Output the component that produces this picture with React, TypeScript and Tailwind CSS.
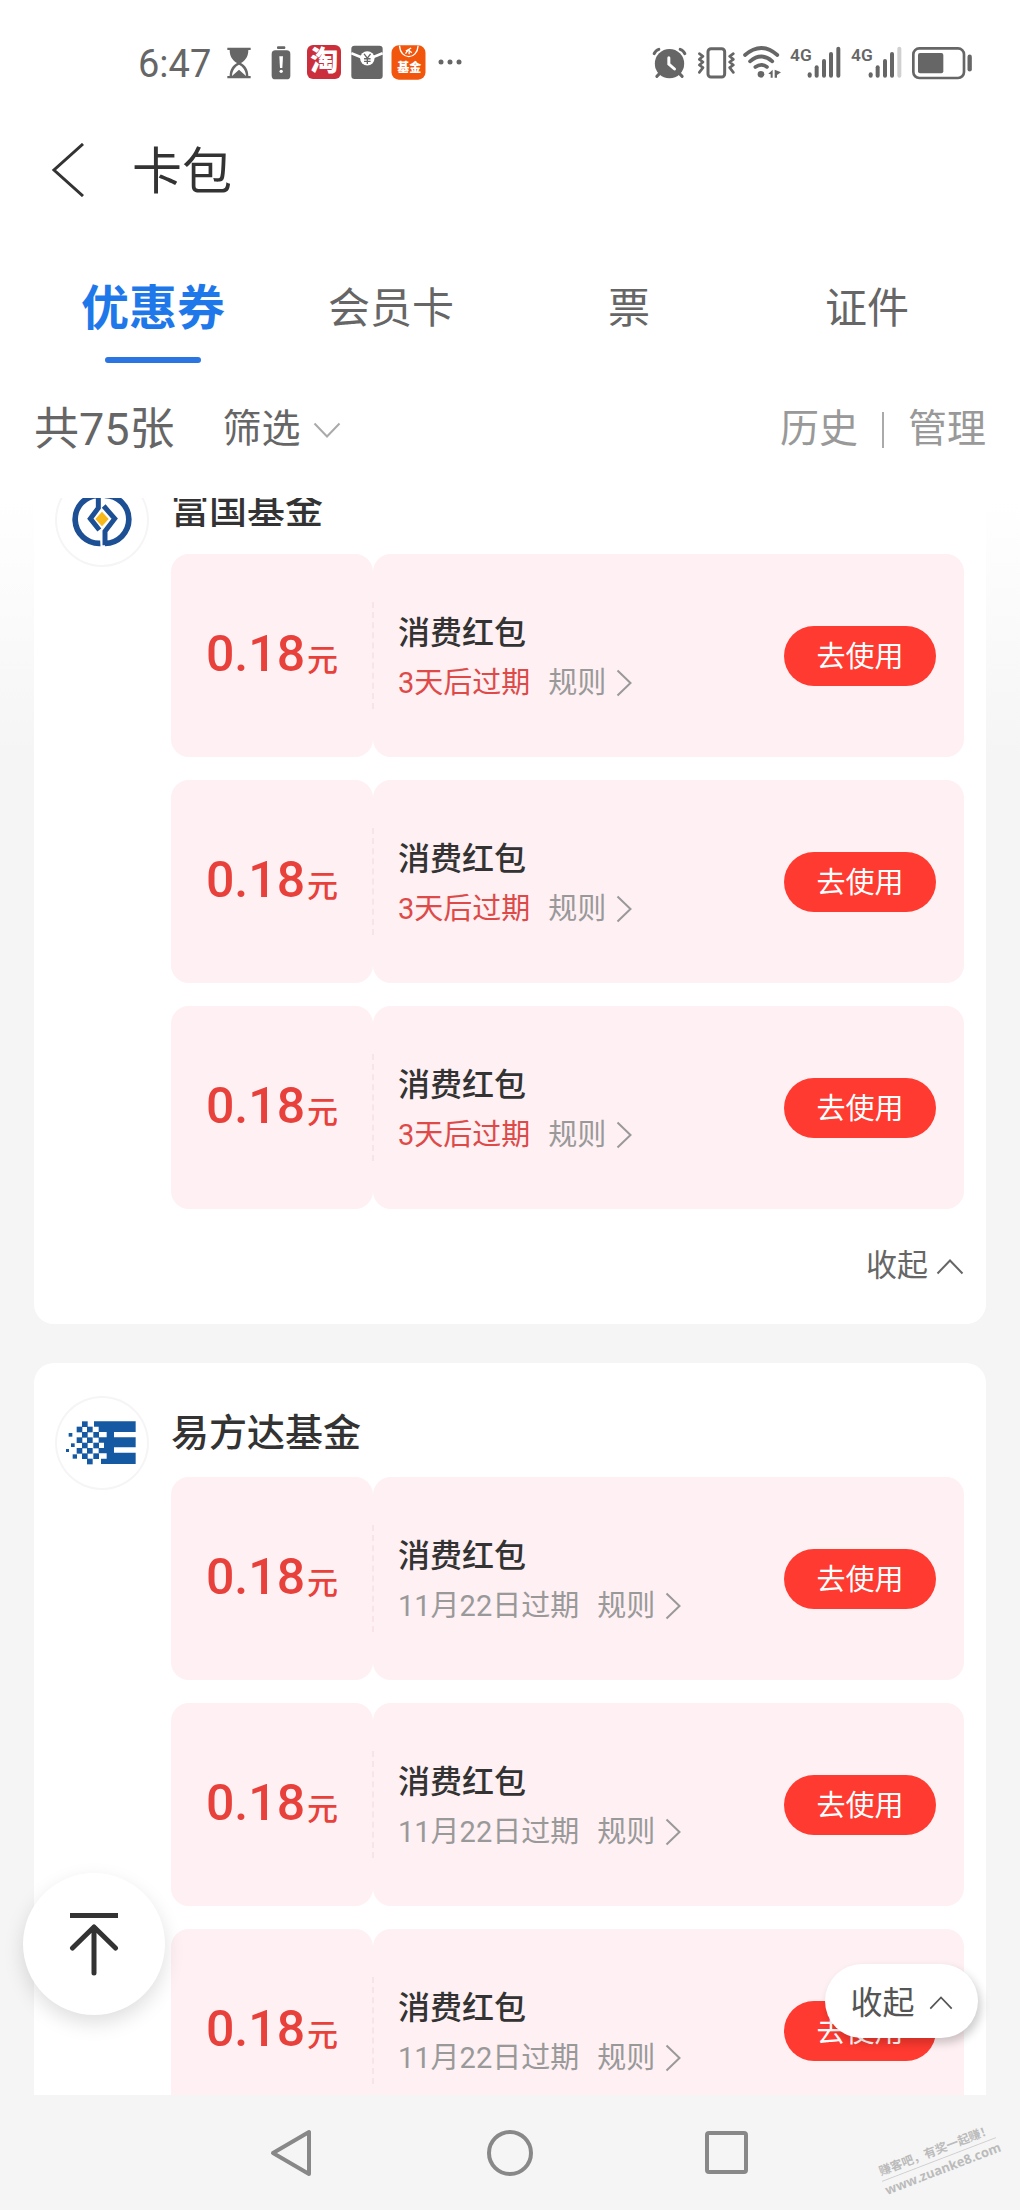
import React from "react";

type Coupon = { amount: string; title: string; expiry: string; urgent: boolean };
type Merchant = { name: string; logo: React.ReactNode; coupons: Coupon[] };

const repeat = (coupon: Coupon, count: number): Coupon[] => Array.from({ length: count }, () => coupon);

function Chevron({ direction, className }: { direction: "up" | "down" | "right"; className: string }) {
  const shape = {
    up: { box: "0 0 28 16", d: "M1.5 14.5 14 1.5 26.5 14.5" },
    down: { box: "0 0 28 16", d: "M1.5 1.5 14 14.5 26.5 1.5" },
    right: { box: "0 0 16 28", d: "M1.5 1.5 14.5 14 1.5 26.5" },
  }[direction];
  return (
    <svg viewBox={shape.box} className={className} fill="none" stroke="currentColor" strokeWidth="2" aria-hidden="true">
      <path d={shape.d} />
    </svg>
  );
}

function FullgoalLogo() {
  return (
    <svg viewBox="81 -9 270 270" className="size-full" fill="none" stroke="#1d4f94" strokeWidth="17" aria-hidden="true">
      <path d="M211 196 A72 72 0 0 1 204 52" />
      <path d="M224 52 A72 72 0 0 1 225 196" />
      <path d="M205 46 V90 L181 122 L208 156" strokeWidth="15" />
      <path d="M225 202 V160 L254 122 L221 84" strokeWidth="15" />
      <path d="M216 101 L236 123 L216 145 L196 123 Z" fill="#f6b81a" stroke="none" />
    </svg>
  );
}

function EfundLogo() {
  const cells: [number, number][] = [
    [156, 211],
    [140, 227], [171, 227],
    [156, 243], [190, 243],
    [140, 259], [171, 259],
    [156, 275], [190, 275],
    [140, 291], [171, 291],
    [156, 307], [190, 307],
    [171, 323],
  ];
  return (
    <svg viewBox="81 141 270 270" className="size-full" fill="#1559a3" aria-hidden="true">
      {cells.map(([x, y]) => (
        <rect key={`${x}-${y}`} x={x} y={y} width="17" height="17" />
      ))}
      <path d="M192 211 H317 V243 H252 V259 H317 V289 H252 V305 H317 V339 H213 V323 H230 V307 H206 V291 H222 V275 H206 V259 H230 V243 H206 V227 H192 Z" />
      <rect x="116" y="246" width="11" height="11" />
      <rect x="123" y="277" width="11" height="11" />
      <rect x="108" y="294" width="9" height="9" />
      <rect x="128" y="310" width="13" height="13" />
    </svg>
  );
}

const merchants: Merchant[] = [
  {
    name: "富国基金",
    logo: <FullgoalLogo />,
    coupons: repeat({ amount: "0.18", title: "消费红包", expiry: "3天后过期", urgent: true }, 3),
  },
  {
    name: "易方达基金",
    logo: <EfundLogo />,
    coupons: repeat({ amount: "0.18", title: "消费红包", expiry: "11月22日过期", urgent: false }, 3),
  },
];

function Signal({ weak }: { weak?: boolean }) {
  return (
    <svg viewBox="472 44 153 105" className="h-[35px] w-[51px]" aria-hidden="true">
      <text x="472" y="91" fontSize="52" fontWeight="600" fill="#666" fontFamily="Roboto, sans-serif">4G</text>
      <g stroke="#666" strokeWidth="12" strokeLinecap="round">
        <path d="M531 132 V136" />
        <path d="M552 111 V136" />
        <path d="M574 92 V136" />
        <path d="M595 71 V136" />
        <path d="M617 55 V136" stroke={weak ? "#d0d0d0" : "#666"} />
      </g>
    </svg>
  );
}

function StatusBar() {
  return (
    <div className="flex h-[124px] items-center justify-between pr-[47px] pl-[138px] text-[#666]">
      <div className="flex items-center">
        <span className="pt-1 text-[38px] leading-none">6:47</span>
        <svg viewBox="320 44 72 105" className="ml-4 h-[35px] w-6" fill="#666" aria-hidden="true">
          <path d="M321 52 H391 V59 H384 C384 82 372 92 362 98 C374 105 384 116 384 137 H391 V144 H321 V137 H328 C328 116 338 105 350 98 C340 92 328 82 328 59 H321 Z" />
          <path d="M335 137 C336 118 346 108 356 103 C366 108 376 118 377 137 L356 118 Z" fill="#fff" />
        </svg>
        <svg viewBox="453 44 60 105" className="ml-5 h-[35px] w-5" fill="#666" aria-hidden="true">
          <rect x="471" y="48" width="25" height="8" rx="3" />
          <rect x="455" y="60" width="56" height="87" rx="11" />
          <path d="M478 78 H489 L487 113 H480 Z" fill="#fff" />
          <circle cx="483.500" cy="123" r="5" fill="#fff" />
        </svg>
        <span className="ml-4 flex size-[34px] items-center justify-center rounded-md bg-[#cb2f3c] text-[28px] leading-none font-black text-white">淘</span>
        <svg viewBox="689 44 98 105" className="ml-2.5 h-[35px] w-8" aria-hidden="true">
          <rect x="690" y="45" width="96" height="102" rx="10" fill="#666" />
          <path d="M690 68 L724 82 M786 68 L752 82" stroke="#fff" strokeWidth="8" />
          <circle cx="739" cy="84" r="22" fill="#fff" />
          <path d="M729 70 L739 83 L749 70 M739 83 V101 M729 85 H749 M729 93 H749" stroke="#666" strokeWidth="4" fill="none" />
        </svg>
        <svg viewBox="812 44 104 105" className="ml-2 size-[35px]" aria-hidden="true">
          <rect x="813" y="45" width="102" height="103" rx="22" fill="#f2560c" />
          <path d="M837 46 C840 90 890 90 893 46" fill="none" stroke="#fff" strokeWidth="4" />
          <path d="M856 62 L872 53 M855 70 L862 60 M864 59 L874 67 M866 56 V72" stroke="#fff" strokeWidth="4" />
          <text x="866" y="125" textAnchor="middle" fontSize="36" fontWeight="900" fill="#fff" fontFamily="'Noto Sans CJK SC', sans-serif">基金</text>
        </svg>
        <svg viewBox="0 0 24 6" className="ml-3 h-1.5 w-6" fill="#666" aria-hidden="true">
          <circle cx="3" cy="3" r="2.500" />
          <circle cx="12" cy="3" r="2.500" />
          <circle cx="21" cy="3" r="2.500" />
        </svg>
      </div>
      <div className="flex items-center">
        <svg viewBox="60 44 104 105" className="size-[35px]" fill="none" stroke="#666" strokeLinecap="round" aria-hidden="true">
          <circle cx="112" cy="100" r="44" fill="#666" stroke="none" />
          <path d="M66 70 Q70 60 80 57 M158 70 Q154 60 144 57" strokeWidth="9" />
          <path d="M82 130 L74 138 M142 130 L150 138" strokeWidth="9" />
          <path d="M110 82 V101 L127 116" stroke="#fff" strokeWidth="9" />
        </svg>
        <svg viewBox="193 44 114 105" className="ml-2.5 h-[35px] w-[38px]" fill="none" stroke="#666" strokeLinecap="round" strokeLinejoin="round" aria-hidden="true">
          <rect x="226" y="55" width="50" height="85" rx="9" strokeWidth="9" />
          <path d="M200 70 L211 78 L200 87 L211 95 L200 104 L211 112 L200 126" strokeWidth="8" />
          <path d="M302 70 L291 78 L302 87 L291 95 L302 104 L291 112 L302 126" strokeWidth="8" />
        </svg>
        <svg viewBox="335 44 117 105" className="ml-2 h-[35px] w-[39px]" fill="none" stroke="#666" strokeWidth="11" strokeLinecap="round" aria-hidden="true">
          <path d="M341 74 Q390 32 438 74" />
          <path d="M356 93 Q390 64 423 93" />
          <path d="M372 110 Q390 97 407 110" />
          <circle cx="389" cy="132" r="10" fill="#666" stroke="none" />
          <path d="M411 130 L424 118 V142 H418 V132 Z" fill="#666" stroke="none" />
          <path d="M430 118 L449 126 L437 134 V142 H430 Z" fill="#666" stroke="none" />
        </svg>
        <div className="ml-2"><Signal /></div>
        <div className="ml-2.5"><Signal weak /></div>
        <svg viewBox="843 44 183 105" className="ml-2.5 h-[35px] w-[61px]" aria-hidden="true">
          <rect x="847" y="54" width="152" height="89" rx="18" fill="none" stroke="#666" strokeWidth="8" />
          <rect x="861" y="68" width="76" height="61" rx="6" fill="#666" />
          <path d="M1016 79 V117" stroke="#666" strokeWidth="13" strokeLinecap="round" />
        </svg>
      </div>
    </div>
  );
}

function CouponRow({ coupon }: { coupon: Coupon }) {
  return (
    <li className="relative flex h-[203px]">
      <div className="flex w-[202px] items-center justify-center rounded-[18px] bg-[#fef0f3] text-[#e8403a]">
        <p className="flex items-baseline gap-0.5 pb-1 leading-none font-medium">
          <span className="text-[50px]">{coupon.amount}</span>
          <span className="text-[31px]">元</span>
        </p>
      </div>
      <span className="absolute top-12 bottom-12 left-[201px] border-l-2 border-dashed border-[#f8e4e8]" />
      <div className="flex flex-1 items-center justify-between rounded-[18px] bg-[#fef0f3] pr-7 pl-[25px]">
        <div className="pt-1">
          <h3 className="text-[32px] leading-[50px] font-medium text-[#333]">{coupon.title}</h3>
          <div className="flex items-center gap-[18px] text-[29px] leading-[50px]">
            <span className={coupon.urgent ? "text-[#dd4a48]" : "text-[#999]"}>{coupon.expiry}</span>
            <button type="button" className="flex items-center gap-2.5 text-[#999]">
              规则
              <Chevron direction="right" className="h-7 w-4" />
            </button>
          </div>
        </div>
        <button type="button" className="h-[60px] w-[152px] rounded-full bg-[#ff3a30] pt-1 text-[29px] leading-none text-white">
          去使用
        </button>
      </div>
    </li>
  );
}

function MerchantCard({ merchant }: { merchant: Merchant }) {
  return (
    <section className="flex gap-6 rounded-[20px] bg-white pt-[35px] pr-[22px] pl-[23px]">
      <div className="size-[90px] shrink-0 overflow-hidden rounded-full ring-2 ring-[#f5f5f5]">{merchant.logo}</div>
      <div className="flex-1">
        <h2 className="mb-[9px] text-[38px] leading-[70px] font-medium text-[#333]">{merchant.name}</h2>
        <ul className="flex flex-col gap-[23px]">
          {merchant.coupons.map((coupon, index) => (
            <CouponRow key={index} coupon={coupon} />
          ))}
        </ul>
        <div className="flex h-[115px] justify-end">
          <button type="button" className="flex items-center gap-2 text-[31px] text-[#666]">
            收起
            <Chevron direction="up" className="h-4 w-7" />
          </button>
        </div>
      </div>
    </section>
  );
}

const tabs = ["优惠券", "会员卡", "票", "证件"];

export default function App() {
  return (
    <div className="flex h-screen flex-col overflow-hidden bg-[#f5f5f5] font-[Roboto,'Noto_Sans_CJK_SC',sans-serif]" lang="zh-CN">
      <header className="bg-white">
        <StatusBar />
        <div className="flex h-[92px] items-center gap-[47px] pl-[51px]">
          <button type="button" aria-label="返回">
            <svg viewBox="0 0 34 54" className="h-[54px] w-[34px]" fill="none" stroke="#333" strokeWidth="3" aria-hidden="true">
              <path d="M32 1 L3 27 L32 53" />
            </svg>
          </button>
          <h1 className="pt-1 text-[50px] leading-none text-[#333]">卡包</h1>
        </div>
        <div role="tablist" className="mt-[53px] grid h-[94px] grid-cols-4 px-[34px]">
          {tabs.map((tab, index) => (
            <button
              key={tab}
              type="button"
              role="tab"
              aria-selected={index === 0}
              className={
                index === 0
                  ? "flex flex-col items-center justify-between text-5xl leading-[80px] font-bold text-[#1f78ea]"
                  : "flex flex-col items-center text-[42px] leading-[80px] text-[#666]"
              }
            >
              {tab}
              {index === 0 && <span className="h-1.5 w-24 rounded-full bg-[#2b75e2]" />}
            </button>
          ))}
        </div>
        <div className="flex h-[135px] items-center justify-between px-[34px] pb-0.5">
          <div className="flex items-center gap-12">
            <p className="text-[45px] leading-none text-[#666]">共75张</p>
            <button type="button" className="flex items-center gap-3 text-[39px] text-[#666]">
              筛选
              <Chevron direction="down" className="h-4 w-7 text-[#aaa]" />
            </button>
          </div>
          <div className="flex items-center gap-6 text-[39px] text-[#999]">
            <button type="button">历史</button>
            <span className="h-9 w-0.5 bg-[#aaa]" />
            <button type="button">管理</button>
          </div>
        </div>
      </header>

      <div className="relative min-h-0 flex-1">
        <main className="h-full overflow-hidden bg-linear-to-b from-white to-[#f5f5f5] to-[260px] px-[34px]">
          <div className="-mt-[58px] flex flex-col gap-[39px]">
            {merchants.map((merchant) => (
              <MerchantCard key={merchant.name} merchant={merchant} />
            ))}
          </div>
        </main>
        <button
          type="button"
          aria-label="回到顶部"
          className="absolute bottom-20 left-[23px] flex size-[142px] items-center justify-center rounded-full bg-white shadow-[0_8px_20px_rgba(0,0,0,0.13)]"
        >
          <svg viewBox="0 0 50 64" className="h-16 w-[50px]" fill="none" stroke="#333" strokeWidth="5" strokeLinecap="round" strokeLinejoin="round" aria-hidden="true">
            <path d="M1 3.500 H49" strokeLinecap="butt" />
            <path d="M25 61 V15 M3.500 36 L25 15 L46.500 36" />
          </svg>
        </button>
        <button
          type="button"
          className="absolute right-[42px] bottom-[57px] flex h-[74px] w-[153px] items-center justify-center gap-3.5 rounded-full bg-white pt-1 text-[32px] text-[#555] shadow-[3px_5px_10px_rgba(0,0,0,0.2)]"
        >
          收起
          <Chevron direction="up" className="h-3.5 w-6" />
        </button>
      </div>

      <nav className="relative flex h-[115px] shrink-0 items-center justify-center gap-[170px] text-[#888]">
        <button type="button" aria-label="后退">
          <svg viewBox="0 0 48 48" className="size-12" fill="none" stroke="currentColor" strokeWidth="4" strokeLinejoin="round" aria-hidden="true">
            <path d="M5 24 L41 3 V45 Z" />
          </svg>
        </button>
        <button type="button" aria-label="主页">
          <svg viewBox="0 0 48 48" className="size-12" fill="none" stroke="currentColor" strokeWidth="4" aria-hidden="true">
            <circle cx="24" cy="24" r="21" />
          </svg>
        </button>
        <button type="button" aria-label="最近任务">
          <svg viewBox="0 0 48 48" className="size-12" fill="none" stroke="currentColor" strokeWidth="4" strokeLinejoin="round" aria-hidden="true">
            <rect x="3" y="4" width="39" height="39" rx="2" />
          </svg>
        </button>
        <div className="absolute right-[20px] bottom-[32px] w-[122px] -rotate-[21deg] text-center font-bold whitespace-nowrap text-[#bbb]">
          <p className="border-b border-[#ccc] text-[12px] leading-[18px]">赚客吧，有奖一起赚！</p>
          <p className="font-['Open_Sans',sans-serif] text-[13px] leading-[18px]">www.zuanke8.com</p>
        </div>
      </nav>
    </div>
  );
}
